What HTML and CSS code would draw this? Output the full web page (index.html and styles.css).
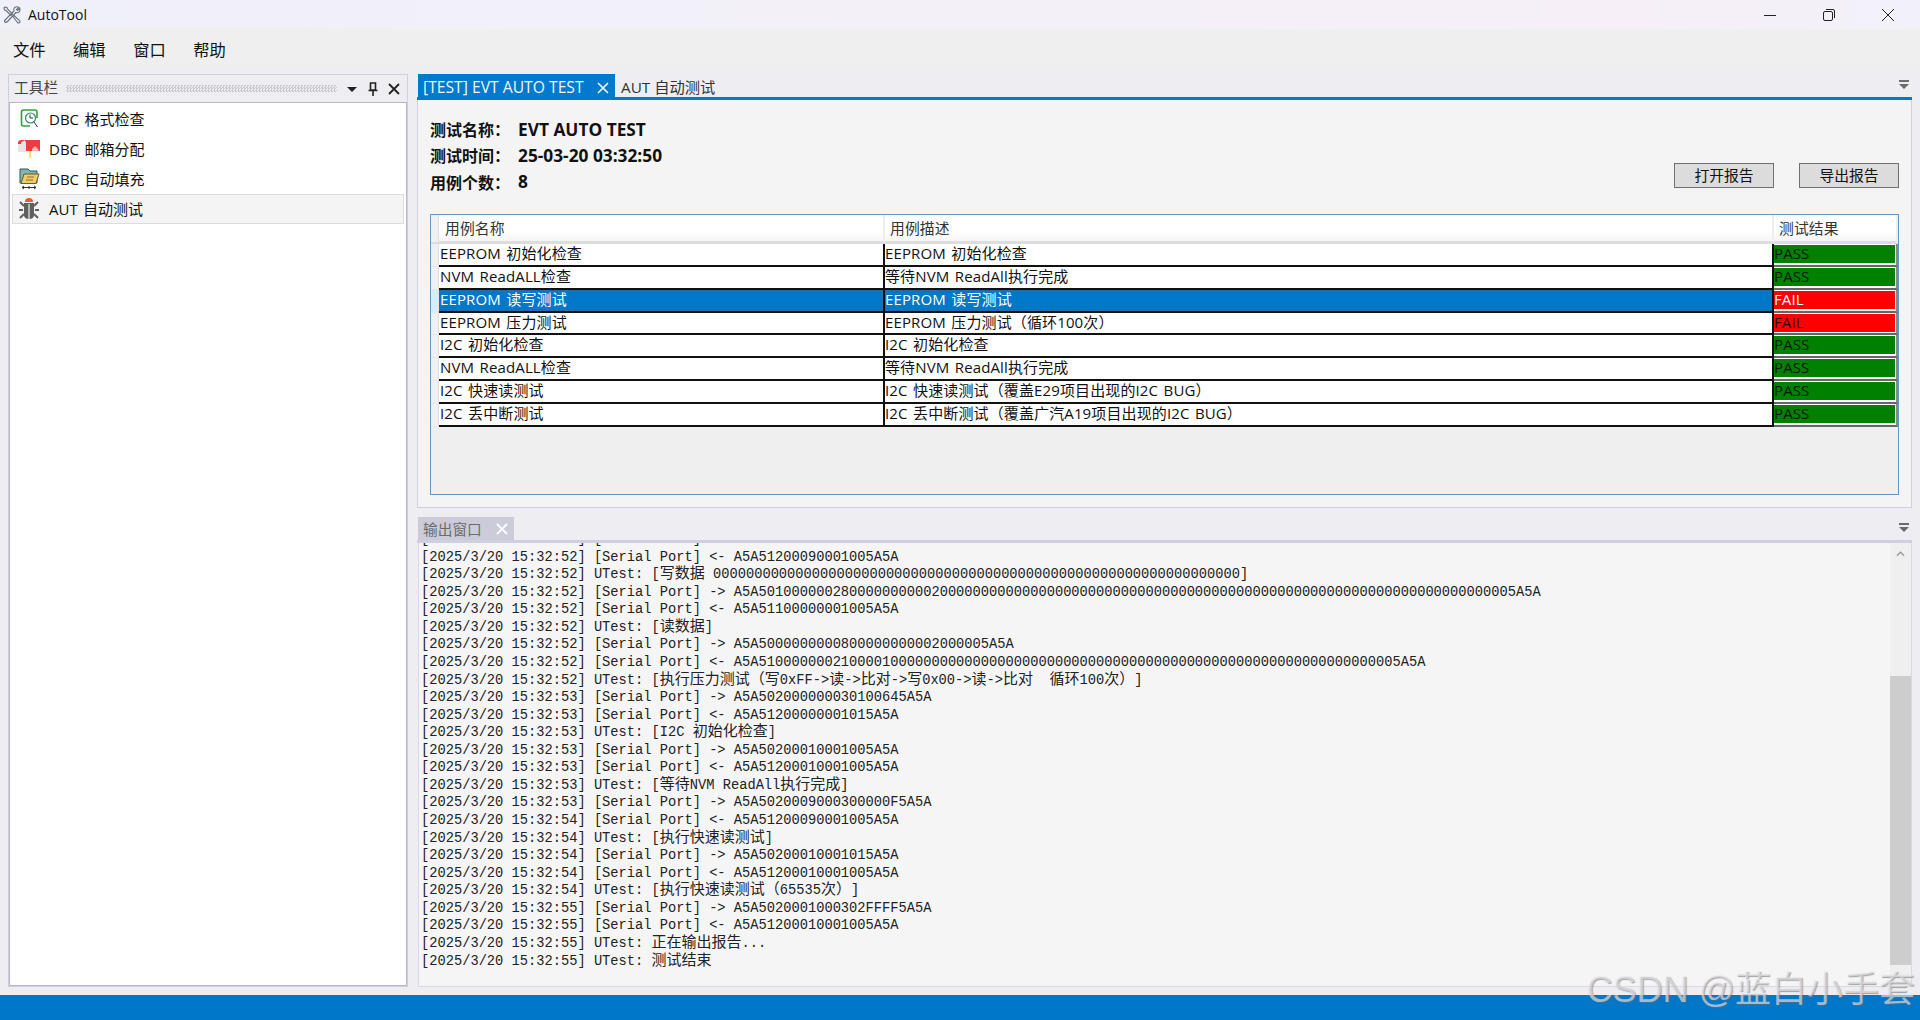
FILE: index.html
```html
<!DOCTYPE html>
<html lang="zh-CN">
<head>
<meta charset="utf-8">
<title>AutoTool</title>
<link rel="stylesheet" href="styles.css">
</head>
<body>
<div class="app">
  <header class="titlebar">
    <div class="app-title">
      <svg class="app-icon" viewBox="0 0 18 18" fill="none" stroke="#66717b" stroke-width="1.100"><path d="M2 1 1 2 1.500 4 3 4.500 8 9.500 9.500 8 4.500 3 4 1.500zM10 10.500 11 9.500 16.500 14.500Q17.500 16 16.500 16.500 15.500 17.500 14.500 16.500z"/><path d="M11.500 1.500Q14 0 16 1.500L13.500 3.500 14.500 4.500 16.800 2.500Q17.500 5 15.500 6.500 14.500 7 13 6.500L4.500 15.500Q3 17 1.800 16 1 15 2.500 13.500L11 5Q10.500 3 11.500 1.500z"/></svg>
      <span>AutoTool</span>
    </div>
    <div class="win-controls">
      <svg viewBox="0 0 12 12" fill="none" stroke="#222" stroke-width="1"><path d="M0 6.500H12"/></svg>
      <svg viewBox="0 0 12 12" fill="none" stroke="#222" stroke-width="1"><rect x="0.500" y="2.500" width="9" height="9" rx="1.500"/><path d="M3 .5H10A1.500 1.500 0 0 1 11.500 2V9"/></svg>
      <svg viewBox="0 0 12 12" fill="none" stroke="#222" stroke-width="1"><path d="M0 0 12 12M12 0 0 12"/></svg>
    </div>
  </header>
  <nav class="menubar"><span>文件</span><span>编辑</span><span>窗口</span><span>帮助</span></nav>
  <main class="workspace">
    <aside class="toolbox">
      <div class="toolbox-head">
        <span class="toolbox-title">工具栏</span>
        <span class="grip"></span>
        <svg class="tool-glyph" viewBox="0 0 12 14"><path d="M1 5H11L6 10z" fill="#222"/></svg>
        <svg class="tool-glyph" viewBox="0 0 12 14" fill="none" stroke="#222" stroke-width="1.600"><path d="M3.500 1H8.500V8H3.500zM1.500 8.500H10.500M6 9V14"/></svg>
        <svg class="tool-glyph" viewBox="0 0 12 14" fill="none" stroke="#222" stroke-width="1.800"><path d="M1 2 11 12M11 2 1 12"/></svg>
      </div>
      <ul class="tool-list">
        <li class="tool-item">
          <svg class="tool-icon" viewBox="0 0 22 22" fill="none"><path d="M12 18H5.500Q3.500 18 3.500 16V4Q3.500 2 5.500 2H17Q19 2 19 4V10" stroke="#3c9a3c" stroke-width="1.600"/><circle cx="12.500" cy="10" r="5" stroke="#2f8a6f" stroke-width="1.200"/><path d="M15 10H12V6.500M16 14 19.500 19" stroke="#333" stroke-width="1"/></svg>
          <span>DBC 格式检查</span>
        </li>
        <li class="tool-item">
          <svg class="tool-icon" viewBox="0 0 22 22"><path d="M7 2H22V13H7z" fill="#ef3b3b"/><path d="M0 5Q0 2 4 2 8 2 8 5V14H0z" fill="#e4e4e4"/><path d="M0 5Q0 2 4 2 6 2 7 3 3 3 3 5V6H0z" fill="#e83b3b"/><path d="M14 11 17 8 20 11 21 13H14z" fill="#f6b6b6"/><path d="M12 13V20" stroke="#f5c518" stroke-width="1.200"/></svg>
          <span>DBC 邮箱分配</span>
        </li>
        <li class="tool-item">
          <svg class="tool-icon" viewBox="0 0 22 22"><path d="M2 1H10L12 3H19V15H2z" fill="#7fb8b0" stroke="#38505a"/><path d="M6 6H21L18 15.500H3z" fill="#f2cb6a" stroke="#6b5a2c"/><path d="M9 9H16M8 12H15" stroke="#8a7330"/><path d="M4 19.500H18M4 19.500 6 18M4 19.500 6 21M18 19.500 16 18M18 19.500 16 21M11 18V21" stroke="#333" fill="none"/></svg>
          <span>DBC 自动填充</span>
        </li>
        <li class="tool-item tool-item-active">
          <svg class="tool-icon" viewBox="0 0 22 22"><path d="M7 4Q7 0 11 0 15 0 15 4z" fill="#ee5a2c"/><path d="M6 5H16V17Q16 21 11 21 6 21 6 17z" fill="#5f5f5f"/><path d="M11 6V21" stroke="#efefef" stroke-width="1.200"/><path d="M6 8 2 4M16 8 20 4M5 12H1M17 12H21M6 16 2 20M16 16 20 20" stroke="#5f5f5f" stroke-width="2"/></svg>
          <span>AUT 自动测试</span>
        </li>
      </ul>
    </aside>
    <section class="right">
      <div class="doc-pane">
        <div class="tabstrip">
          <div class="tab tab-active"><span>[TEST] EVT AUTO TEST</span><svg viewBox="0 0 12 12" fill="none" stroke="#fff" stroke-width="1.500"><path d="M1 1 11 11M11 1 1 11"/></svg></div>
          <div class="tab tab-plain">AUT 自动测试</div>
          <svg class="overflow" viewBox="0 0 10 10"><path d="M0 0H10V2H0zM0 4H10L5 9z" fill="#6b6b6b"/></svg>
        </div>
        <div class="doc-body">
          <div class="summary">
            <dl class="meta">
              <div><dt>测试名称：</dt><dd>EVT AUTO TEST</dd></div>
              <div><dt>测试时间：</dt><dd>25-03-20 03:32:50</dd></div>
              <div><dt>用例个数：</dt><dd>8</dd></div>
            </dl>
            <div class="actions"><button>打开报告</button><button>导出报告</button></div>
          </div>
          <div class="grid">
            <div class="row head"><div class="stub"></div><div class="c c1">用例名称</div><div class="c c2">用例描述</div><div class="c c3">测试结果</div></div>
            <div class="row"><div class="stub"></div><div class="c c1">EEPROM 初始化检查</div><div class="c c2">EEPROM 初始化检查</div><div class="c c3"><span class="res pass">PASS</span></div></div>
            <div class="row"><div class="stub"></div><div class="c c1">NVM ReadALL检查</div><div class="c c2">等待NVM ReadAll执行完成</div><div class="c c3"><span class="res pass">PASS</span></div></div>
            <div class="row selected"><div class="stub"></div><div class="c c1">EEPROM 读写测试</div><div class="c c2">EEPROM 读写测试</div><div class="c c3"><span class="res fail">FAIL</span></div></div>
            <div class="row"><div class="stub"></div><div class="c c1">EEPROM 压力测试</div><div class="c c2">EEPROM 压力测试（循环100次）</div><div class="c c3"><span class="res fail">FAIL</span></div></div>
            <div class="row"><div class="stub"></div><div class="c c1">I2C 初始化检查</div><div class="c c2">I2C 初始化检查</div><div class="c c3"><span class="res pass">PASS</span></div></div>
            <div class="row"><div class="stub"></div><div class="c c1">NVM ReadALL检查</div><div class="c c2">等待NVM ReadAll执行完成</div><div class="c c3"><span class="res pass">PASS</span></div></div>
            <div class="row"><div class="stub"></div><div class="c c1">I2C 快速读测试</div><div class="c c2">I2C 快速读测试（覆盖E29项目出现的I2C BUG）</div><div class="c c3"><span class="res pass">PASS</span></div></div>
            <div class="row"><div class="stub"></div><div class="c c1">I2C 丢中断测试</div><div class="c c2">I2C 丢中断测试（覆盖广汽A19项目出现的I2C BUG）</div><div class="c c3"><span class="res pass">PASS</span></div></div>
          </div>
        </div>
      </div>
      <div class="out-pane">
        <div class="out-tabs">
          <div class="out-tab"><span>输出窗口</span><svg viewBox="0 0 12 12" fill="none" stroke="#fff" stroke-width="1.800"><path d="M1 1 11 11M11 1 1 11"/></svg></div>
          <svg class="overflow" viewBox="0 0 10 10"><path d="M0 0H10V2H0zM0 4H10L5 9z" fill="#6b6b6b"/></svg>
        </div>
        <div class="out-body">
          <div class="log">
            <p class="cut">[2025/3/20 15:32:52] [Serial Port] -&gt; A5A5020009000000000F5A5A</p>
            <p>[2025/3/20 15:32:52] [Serial Port] &lt;- A5A51200090001005A5A</p>
            <p>[2025/3/20 15:32:52] UTest: [<span class="zh">写数据</span> 0000000000000000000000000000000000000000000000000000000000000000]</p>
            <p>[2025/3/20 15:32:52] [Serial Port] -&gt; A5A50100000028000000000020000000000000000000000000000000000000000000000000000000000000000000005A5A</p>
            <p>[2025/3/20 15:32:52] [Serial Port] &lt;- A5A51100000001005A5A</p>
            <p>[2025/3/20 15:32:52] UTest: [<span class="zh">读数据</span>]</p>
            <p>[2025/3/20 15:32:52] [Serial Port] -&gt; A5A5000000000800000000002000005A5A</p>
            <p>[2025/3/20 15:32:52] [Serial Port] &lt;- A5A510000000210000100000000000000000000000000000000000000000000000000000000000005A5A</p>
            <p>[2025/3/20 15:32:52] UTest: [<span class="zh">执行压力测试（写</span>0xFF-&gt;<span class="zh">读</span>-&gt;<span class="zh">比对</span>-&gt;<span class="zh">写</span>0x00-&gt;<span class="zh">读</span>-&gt;<span class="zh">比对</span>  <span class="zh">循环</span>100<span class="zh">次）</span>]</p>
            <p>[2025/3/20 15:32:53] [Serial Port] -&gt; A5A502000000030100645A5A</p>
            <p>[2025/3/20 15:32:53] [Serial Port] &lt;- A5A51200000001015A5A</p>
            <p>[2025/3/20 15:32:53] UTest: [I2C <span class="zh">初始化检查</span>]</p>
            <p>[2025/3/20 15:32:53] [Serial Port] -&gt; A5A50200010001005A5A</p>
            <p>[2025/3/20 15:32:53] [Serial Port] &lt;- A5A51200010001005A5A</p>
            <p>[2025/3/20 15:32:53] UTest: [<span class="zh">等待</span>NVM ReadAll<span class="zh">执行完成</span>]</p>
            <p>[2025/3/20 15:32:53] [Serial Port] -&gt; A5A5020009000300000F5A5A</p>
            <p>[2025/3/20 15:32:54] [Serial Port] &lt;- A5A51200090001005A5A</p>
            <p>[2025/3/20 15:32:54] UTest: [<span class="zh">执行快速读测试</span>]</p>
            <p>[2025/3/20 15:32:54] [Serial Port] -&gt; A5A50200010001015A5A</p>
            <p>[2025/3/20 15:32:54] [Serial Port] &lt;- A5A51200010001005A5A</p>
            <p>[2025/3/20 15:32:54] UTest: [<span class="zh">执行快速读测试（</span>65535<span class="zh">次）</span>]</p>
            <p>[2025/3/20 15:32:55] [Serial Port] -&gt; A5A5020001000302FFFF5A5A</p>
            <p>[2025/3/20 15:32:55] [Serial Port] &lt;- A5A51200010001005A5A</p>
            <p>[2025/3/20 15:32:55] UTest: <span class="zh">正在输出报告</span>...</p>
            <p>[2025/3/20 15:32:55] UTest: <span class="zh">测试结束</span></p>
          </div>
          <div class="scrollbar">
            <svg class="chev" viewBox="0 0 10 6" fill="none" stroke="#9a9a9a" stroke-width="1.500"><path d="M1 5 5 1 9 5"/></svg>
            <div class="thumb"></div>
          </div>
        </div>
      </div>
    </section>
  </main>
  <footer class="statusbar"></footer>
  <div class="watermark">CSDN @蓝白小手套</div>
</div>
</body>
</html>
```
FILE: styles.css
```css
* { box-sizing: border-box; }
html, body { margin: 0; height: 100%; }
body { font-family: "Noto Sans CJK SC", "Noto Sans", sans-serif; color: #111; overflow: hidden; text-spacing-trim: space-all; }
ul, dl, dd, p { margin: 0; padding: 0; }
.app { width: 1920px; height: 1020px; display: flex; flex-direction: column; position: relative; background: #eeeef2; }

.titlebar { height: 29px; display: flex; justify-content: space-between; align-items: center; background: linear-gradient(90deg, #f0f0f8 0%, #f4f0f8 60%, #f6eff7 85%, #f2f1f9 100%); }
.app-title { display: flex; align-items: center; gap: 7px; padding-left: 3px; font: 14px "Open Sans", "Noto Sans", sans-serif; }
.app-icon { width: 18px; height: 18px; }
.win-controls { display: flex; align-items: center; gap: 47px; padding-right: 26px; }
.win-controls svg { width: 12px; height: 12px; }

.menubar { height: 37px; background: #efefef; display: flex; align-items: center; gap: 27.500px; padding: 4px 0 0 13px; font-size: 16.300px; line-height: 1; }

.workspace { flex: 1; display: flex; padding: 8px; gap: 9px; min-height: 0; }

.toolbox { width: 400px; display: flex; flex-direction: column; border: 1px solid #cfcfe0; background: #eeeef2; }
.toolbox-head { height: 27px; display: flex; align-items: center; padding: 0 7px 0 5px; gap: 9px; flex: none; }
.toolbox-title { font-size: 14.700px; line-height: 1; color: #444; padding-bottom: 3px; }
.grip { flex: 1; height: 7px; margin: 0 0 0 -1px; background: repeating-conic-gradient(#c9c9d0 0 25%, transparent 0 50%) 0 0 / 3px 3px; }
.tool-glyph { width: 12px; height: 14px; }
.tool-list { flex: 1; list-style: none; background: #fff; border: 1px solid #b8b8c8; padding: 1px 2px; }
.tool-item { height: 30px; display: flex; align-items: center; gap: 9px; padding-left: 6px; font: 15px "Open Sans", "Noto Sans CJK SC", sans-serif; word-spacing: 1.500px; }
.tool-item span { line-height: 1; }
.tool-icon { width: 22px; height: 22px; flex: none; }
.tool-item-active { background: #f4f4f4; border: 1px solid #dcdcdc; padding-left: 5px; }

.right { flex: 1; min-width: 0; display: flex; flex-direction: column; gap: 9px; }

.doc-pane { height: 434px; display: flex; flex-direction: column; }
.tabstrip { height: 26px; position: relative; display: flex; align-items: flex-start; border-bottom: 3px solid #007acc; flex: none; }
.tab { display: flex; align-items: center; }
.tab-active { width: 197px; height: 26px; margin-left: 1px; background: #007acc; color: #f0f6fb; padding: 0 6px 0 5px; justify-content: space-between; font: 15.700px "Open Sans", "Noto Sans CJK SC", sans-serif; }
.tab-active svg { width: 12px; height: 12px; margin-top: 2px; }
.tab-plain { height: 23px; padding-left: 6px; color: #333; font: 15.300px "Open Sans", "Noto Sans CJK SC", sans-serif; }
.overflow { position: absolute; right: 3px; top: 6px; width: 10px; height: 10px; }

.doc-body { flex: 1; background: #f4f4f5; border: 1px solid #cfcfe0; border-top: 0; padding: 16px 12px 12px 12px; display: flex; flex-direction: column; }
.summary { height: 98px; display: flex; justify-content: space-between; flex: none; }
.meta { font-weight: 700; color: #111; }
.meta div { display: flex; height: 26.250px; align-items: center; line-height: 1; }
.meta dt { width: 88px; font: 700 16px "Noto Sans CJK SC", sans-serif; }
.meta dd { font: 700 17.300px "Open Sans", sans-serif; }
.actions { display: flex; gap: 25px; padding-top: 47px; }
.actions button { width: 100px; height: 25px; background: #dcdcdc; border: 1px solid #707070; font: 14.800px/1 "Noto Sans CJK SC", sans-serif; color: #111; padding: 0; }

.grid { flex: 1; background: #efefef; border: 1px solid #6a93bd; min-height: 0; }
.row { display: grid; grid-template-columns: 8px 446px 889px 1fr; height: 22.850px; font: 15px "Open Sans", "Noto Sans CJK SC", sans-serif; letter-spacing: .12px; word-spacing: 1.500px; color: #111; }
.stub { background: #f0f0f0; border-right: 1px solid #e0e0e0; border-bottom: 1px solid #e6e6e6; }
.c { background: #fff; border-right: 2px solid #111; border-bottom: 2px solid #111; line-height: 19px; white-space: nowrap; overflow: hidden; }
.c1 { padding-left: 1px; }
.c3 { padding-top: 1px; border-right: 2px solid #888; border-bottom-color: #666; }
.res { display: block; height: 18px; width: 121px; line-height: 17px; }
.pass { background: #008000; color: #041804; }
.fail { background: #f00; color: #300; }
.head { height: 29px; }
.head .stub { border-bottom: 2px solid #ddd; }
.head .c { background: linear-gradient(#fff 60%, #f5f5f5); border-right: 2px solid #eee; border-bottom: 3px solid #ddd; padding: 0 0 0 5px; font: 14.800px/25px "Noto Sans CJK SC", sans-serif; color: #333; }
.head .c1 { padding-left: 6px; }
.selected .c { background: #0078c8; color: #fff; box-shadow: inset 0 0 0 1px #2b6aa8; }
.selected .c3 { background: #fff; box-shadow: none; }
.selected .stub { background: #d8ecf8; }
.selected .fail { color: #fff; }

.out-pane { flex: 1; min-height: 0; display: flex; flex-direction: column; }
.out-tabs { height: 26px; flex: none; position: relative; border-bottom: 3px solid #cfcfe0; }
.out-tab { width: 96px; height: 23px; margin-left: 1px; background: #cbcbd9; display: flex; align-items: center; justify-content: space-between; padding: 1px 6px 0 5px; font-size: 14.700px; line-height: 1; color: #6b6b6b; }
.out-tab svg { width: 12px; height: 12px; }
.out-body { flex: 1; min-height: 0; display: flex; background: #f5f5f6; border: 1px solid #d8d8e6; border-top: 0; margin-left: 1px; }
.log { flex: 1; min-width: 0; overflow: hidden; font: 13.730px/17.570px "Liberation Mono", "Noto Sans CJK SC", monospace; color: #222; padding-left: 2px; }
.log p { white-space: pre; height: 17.570px; }
.log .cut { margin-top: -12px; }
.zh { font: 15px/0 "Noto Sans CJK SC", sans-serif; }
.scrollbar { width: 21px; background: #efefef; display: flex; flex-direction: column; align-items: center; padding-top: 8px; flex: none; position: relative; }
.chev { width: 9px; height: 6px; }
.thumb { position: absolute; left: 0; right: 0; top: 133px; height: 289px; background: #cdcdcd; }

.statusbar { height: 25px; flex: none; background: #0077c8; }
.watermark { position: absolute; right: 5px; bottom: 10px; font: 36px/1.100 "Liberation Sans", "Noto Sans CJK SC", sans-serif; color: rgba(238,238,242,.6); text-shadow: 1px 1px 1px rgba(110,110,110,.6); pointer-events: none; }
```
